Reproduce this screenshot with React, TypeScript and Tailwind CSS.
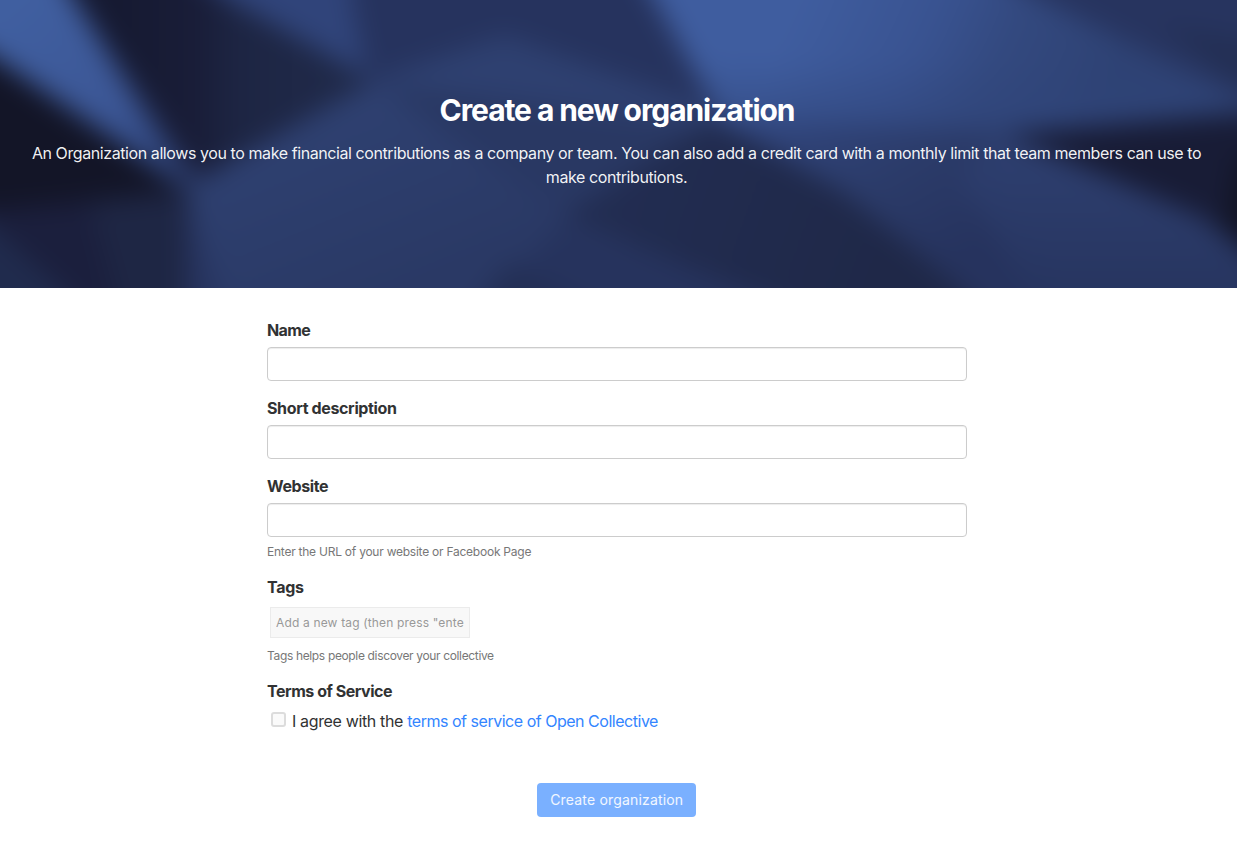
import React from "react";

function HeroBackdrop() {
  return (
    <svg className="absolute inset-0 h-full w-full" viewBox="0 0 1237 288" preserveAspectRatio="none" aria-hidden="true">
      <defs>
        <filter id="soft" filterUnits="userSpaceOnUse" x="-100" y="-100" width="1437" height="488" colorInterpolationFilters="sRGB">
          <feGaussianBlur stdDeviation="13" />
        </filter>
        <linearGradient id="beam" gradientUnits="userSpaceOnUse" x1="20" y1="0" x2="175" y2="175">
          <stop offset="0" stopColor="#405fa0" />
          <stop offset="0.6" stopColor="#3c5796" />
          <stop offset="1" stopColor="#304780" />
        </linearGradient>
        <linearGradient id="shade" gradientUnits="userSpaceOnUse" x1="120" y1="0" x2="350" y2="0">
          <stop offset="0" stopColor="#161a32" />
          <stop offset="0.34" stopColor="#191d38" />
          <stop offset="0.5" stopColor="#1d2543" />
          <stop offset="1" stopColor="#202a4a" />
        </linearGradient>
        <linearGradient id="bright" gradientUnits="userSpaceOnUse" x1="800" y1="0" x2="1090" y2="130">
          <stop offset="0" stopColor="#3f5d9f" />
          <stop offset="0.4" stopColor="#395391" />
          <stop offset="0.65" stopColor="#33497f" />
          <stop offset="1" stopColor="#2e4274" />
        </linearGradient>
        <linearGradient id="brightFade" gradientUnits="userSpaceOnUse" x1="0" y1="60" x2="0" y2="140">
          <stop offset="0" stopColor="#2f4479" stopOpacity="0" />
          <stop offset="1" stopColor="#2f4479" stopOpacity="0.7" />
        </linearGradient>
        <linearGradient id="lower" gradientUnits="userSpaceOnUse" x1="800" y1="120" x2="900" y2="290">
          <stop offset="0" stopColor="#30447a" />
          <stop offset="0.5" stopColor="#2b3b69" />
          <stop offset="1" stopColor="#26335e" />
        </linearGradient>
        <linearGradient id="lowerRight" gradientUnits="userSpaceOnUse" x1="1080" y1="160" x2="1080" y2="290">
          <stop offset="0" stopColor="#2d3e6e" />
          <stop offset="1" stopColor="#273560" />
        </linearGradient>
        <linearGradient id="facet" gradientUnits="userSpaceOnUse" x1="330" y1="120" x2="400" y2="290">
          <stop offset="0" stopColor="#2e4070" />
          <stop offset="1" stopColor="#2a3965" />
        </linearGradient>
        <linearGradient id="dusk" gradientUnits="userSpaceOnUse" x1="600" y1="180" x2="880" y2="280">
          <stop offset="0" stopColor="#222d52" />
          <stop offset="1" stopColor="#1f2848" />
        </linearGradient>
      </defs>
      <rect width="1237" height="288" fill="#2a3966" />
      <g filter="url(#soft)">
        <rect x="-90" y="-90" width="1417" height="468" fill="#2a3966" />
        <polygon points="-60,-60 36,-60 72,0 186,186 0,60 -60,22" fill="url(#beam)" />
        <polygon points="-60,26 0,62 188,192 0,212 -60,218" fill="#131527" />
        <polygon points="-60,216 0,210 192,190 190,350 -60,350" fill="#1b1f3d" />
        <polygon points="90,204 192,190 190,350 130,350" fill="#1e2644" />
        <polygon points="-60,180 75,300 75,350 -60,350" fill="#202b4d" />
        <polygon points="44,-60 78,0 184,160 200,178 372,80 240,0 150,-60" fill="url(#shade)" />
        <polygon points="150,-60 230,0 366,76 352,0 352,-60" fill="#30447a" />
        <polygon points="350,-60 352,0 370,80 505,34 715,108 658,0 620,-60" fill="#26335e" />
        <polygon points="372,80 505,36 715,112 725,130 640,170" fill="#2e4070" />
        <polygon points="376,84 192,186 190,350 460,350 565,222" fill="url(#facet)" />
        <polygon points="186,186 235,350 186,350" fill="#27345f" />
        <polygon points="385,84 575,215 735,130 480,96" fill="#293863" />
        <polygon points="440,350 560,226 840,320 840,350" fill="#26335d" />
        <polygon points="440,350 510,262 600,310 620,350" fill="#232f55" />
        <polygon points="560,218 724,112 800,156 975,300 1030,350 900,350" fill="url(#dusk)" />
        <polygon points="620,-60 655,0 725,125 1010,130 1300,118 1300,130 1042,0 940,-60" fill="url(#bright)" />
        <polygon points="690,60 1110,60 1237,110 1010,135 725,130" fill="url(#brightFade)" />
        <polygon points="722,122 1010,130 1130,350 1040,350 840,190" fill="url(#lower)" />
        <polygon points="1000,130 1210,224 1300,330 1300,350 1070,350 960,180" fill="url(#lowerRight)" />
        <polygon points="940,-60 1042,0 1237,88 1300,116 1300,-60" fill="#27345f" />
        <polygon points="1160,25 1300,50 1300,110 1237,84" fill="#232f54" />
        <polygon points="1005,134 1237,114 1300,110 1300,310 1237,245 1200,216" fill="#181c36" />
        <polygon points="1237,160 1300,130 1300,290 1225,225" fill="#121423" />
      </g>
    </svg>
  );
}

function Field({ label, tracking, help }: { label: string; tracking: string; help?: string }) {
  return (
    <div className="mb-[15px]">
      <label className="block">
        <span className={`mb-[5px] block text-[16px] leading-6 font-bold ${tracking}`}>{label}</span>
        <input
          type="text"
          className="block h-[34px] w-full rounded-[4px] border border-[#ccc] bg-white px-3 text-sm shadow-[inset_0_1px_1px_rgba(0,0,0,0.075)]"
        />
      </label>
      {help && <p className="mt-[5px] text-[12px] leading-[20px] tracking-[-0.24px] text-[#777]">{help}</p>}
    </div>
  );
}

export default function App() {
  return (
    <div className="min-h-[860px] bg-white font-['Inter',sans-serif] text-[16px] text-[#313233]">
      <header className="relative h-[288px] overflow-hidden text-white">
        <HeroBackdrop />
        <div className="relative pt-[90px] pr-[20px] pl-[16px] text-center">
          <h1 className="pl-px text-[30px] leading-[40px] font-bold tracking-[-1.09px]">Create a new organization</h1>
          <p className="mt-[11px] px-[12px] text-[16px] leading-6 tracking-[-0.415px] text-white/95">
            An Organization allows you to make financial contributions as a company or team. You can also add a credit card with a monthly limit that team members can use to make contributions.
          </p>
        </div>
      </header>
      <main className="ml-[267px] w-[699.5px] pt-[30px]">
        <Field label="Name" tracking="tracking-[-0.6px]" />
        <Field label="Short description" tracking="tracking-[-0.36px]" />
        <Field label="Website" tracking="tracking-[-0.4px]" help="Enter the URL of your website or Facebook Page" />
        <section className="-mt-[2px]">
          <h2 className="text-[16px] leading-6 font-bold tracking-[-0.3px]">Tags</h2>
          <input
            type="text"
            placeholder={'Add a new tag (then press "ente'}
            className="mt-[8px] ml-[3px] block h-[31px] w-[200px] border border-[#ebebeb] bg-[#f8f8f8] px-[5px] text-[12px] tracking-[0.16px] placeholder:text-[#999]"
          />
          <p className="mt-[8px] text-[12px] leading-[20px] tracking-[-0.35px] text-[#777]">Tags helps people discover your collective</p>
        </section>
        <section className="mt-[13px]">
          <h2 className="text-[16px] leading-6 font-bold tracking-[-0.47px]">Terms of Service</h2>
          <label className="mt-[6px] flex items-start leading-6 tracking-[-0.35px]">
            <input
              type="checkbox"
              className="mt-[3px] mr-[6px] ml-[4px] h-[15px] w-[15px] appearance-none rounded-[3px] border-2 border-[#dcdcdc] bg-[#fafafa]"
            />
            <span>
              I agree with the <a href="#terms" className="tracking-[-0.48px] text-[#3385ff]">terms of service of Open Collective</a>
            </span>
          </label>
        </section>
        <div className="mt-[50px] flex justify-center">
          <button type="button" disabled className="h-[34px] w-[159px] rounded-[4px] bg-[#7ab0ff] pb-[2px] text-[14px] tracking-[0.18px] whitespace-nowrap text-white/90">
            Create organization
          </button>
        </div>
      </main>
    </div>
  );
}
